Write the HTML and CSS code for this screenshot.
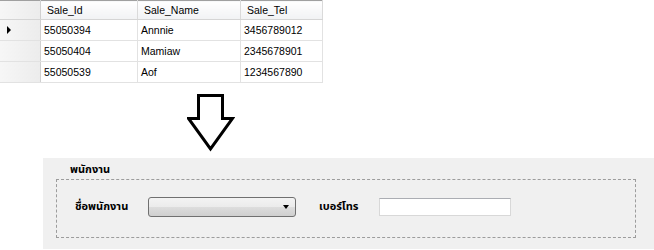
FILE: index.html
```html
<!DOCTYPE html>
<html lang="th">
<head>
    <meta charset="UTF-8">
    <title>พนักงาน</title>
    <link rel="stylesheet" href="styles.css">
</head>
<body>
    <table class="grid">
        <thead>
            <tr>
                <th class="row-head"></th>
                <th class="col-id">Sale_Id</th>
                <th class="col-name">Sale_Name</th>
                <th class="col-tel">Sale_Tel</th>
            </tr>
        </thead>
        <tbody>
            <tr>
                <td class="row-head"><span class="current"></span></td>
                <td>55050394</td>
                <td>Annnie</td>
                <td>3456789012</td>
            </tr>
            <tr>
                <td class="row-head"></td>
                <td>55050404</td>
                <td>Mamiaw</td>
                <td>2345678901</td>
            </tr>
            <tr>
                <td class="row-head"></td>
                <td>55050539</td>
                <td>Aof</td>
                <td>1234567890</td>
            </tr>
        </tbody>
    </table>

    <div class="arrow">
        <svg width="48" height="58" viewBox="0 0 48 58">
            <path d="M11.5 1.5 H35.5 V24.5 H45.5 L23.5 55 L1.5 24.5 H11.5 Z" fill="#fff" stroke="#000" stroke-width="3" stroke-linejoin="miter"/>
        </svg>
    </div>

    <div class="panel">
        <div class="group-title">พนักงาน</div>
        <div class="group-box">
            <label class="field-label name-label">ชื่อพนักงาน</label>
            <div class="combo"><span class="combo-arrow"></span></div>
            <label class="field-label tel-label">เบอร์โทร</label>
            <input class="textbox" type="text">
        </div>
    </div>
</body>
</html>
```

FILE: styles.css
```css
body {
    margin: 0;
    background-color: white;
    font-family: 'Liberation Sans', Arial, sans-serif;
    color: #000;
}

/* data grid */
.grid {
    border-collapse: collapse;
    border-top: 1px solid #a0a0a0;
    font-size: 10.5px;
    table-layout: fixed;
}
.grid th, .grid td {
    padding: 0 3px;
    text-align: left;
    white-space: nowrap;
    border-right: 1px solid #e2e2e2;
    border-bottom: 1px solid #e2e2e2;
}
.grid th {
    height: 18px;
    padding-left: 6px;
    font-weight: normal;
    background: linear-gradient(#ffffff, #f1f2f4);
    border-bottom: 1px solid #d5d5d5;
    border-right: 1px solid #dadada;
}
.grid td {
    height: 20px;
}
.grid .row-head {
    width: 40px;
    padding: 0;
    background: linear-gradient(90deg, #f6f6f6, #ececec);
    border-right: 1px solid #d0d0d0;
}
.grid .col-id { width: 87px; }
.grid .col-name { width: 93px; }
.grid .col-tel { width: 72px; }
.current {
    display: block;
    margin-left: 7px;
    width: 0;
    height: 0;
    border-top: 4px solid transparent;
    border-bottom: 4px solid transparent;
    border-left: 4px solid #000;
}

.arrow {
    margin: 11px 0 0 187px;
    height: 64px;
}
.arrow svg {
    display: block;
}

/* form panel */
.panel {
    margin-left: 43px;
    height: 91px;
    background-color: #f0f0f0;
    padding: 5px 18px 0 13px;
    box-sizing: border-box;
    font-family: Tahoma, 'Noto Sans Thai', 'Loma', 'Garuda', 'DejaVu Sans', sans-serif;
    font-size: 11px;
    font-weight: bold;
}
.group-title {
    margin-left: 14px;
    height: 16px;
    line-height: 14px;
}
.group-box {
    display: flex;
    align-items: center;
    height: 59px;
    box-sizing: border-box;
    border: 1px dashed #9c9c9c;
    padding: 0 0 4px 18px;
}
.field-label {
    display: block;
}
.name-label {
    width: 73px;
}
.tel-label {
    width: 60px;
    margin-left: 23px;
}
.combo {
    position: relative;
    width: 148px;
    height: 20px;
    box-sizing: border-box;
    border: 1px solid #707070;
    border-radius: 3px;
    background: linear-gradient(#f3f3f3 0%, #ebebeb 50%, #dddddd 51%, #cfcfcf 100%);
}
.combo-arrow {
    position: absolute;
    right: 6px;
    top: 7px;
    width: 0;
    height: 0;
    border-left: 3px solid transparent;
    border-right: 3px solid transparent;
    border-top: 4px solid #000;
}
.textbox {
    width: 132px;
    height: 18px;
    box-sizing: border-box;
    margin: 0;
    border: 1px solid #d8d8d8;
    border-top-color: #abadb3;
    background: white;
    padding: 0;
}
```
